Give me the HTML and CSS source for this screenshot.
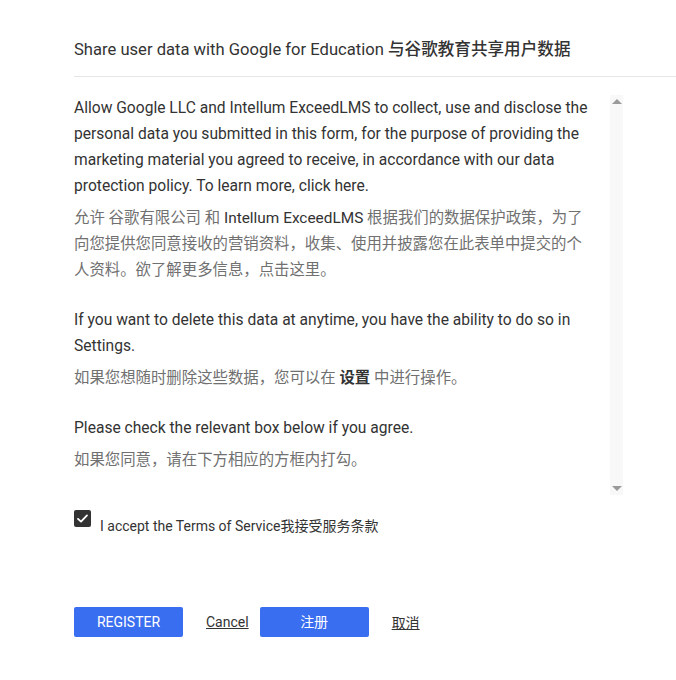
FILE: index.html
```html
<!DOCTYPE html>
<html>
    <head>
        <meta charset="utf-8">
        <title>Share user data</title>
        <link rel="stylesheet" href="styles.css">
    </head>
    <body>
        <div class="dialog">
            <h2 class="title">Share user data with Google for Education <span class="title-zh">与谷歌教育共享用户数据</span></h2>
            <hr class="divider">

            <div class="consent">
                <div class="consent-text">
                    <p class="en">Allow Google LLC and Intellum ExceedLMS to collect, use and disclose the personal data you submitted in this form, for the purpose of providing the marketing material you agreed to receive, in accordance with our data protection policy. To learn more, click here.</p>
                    <p class="zh">允许 谷歌有限公司 和 <span class="dark">Intellum ExceedLMS</span> 根据我们的数据保护政策，为了向您提供您同意接收的营销资料，收集、使用并披露您在此表单中提交的个人资料。欲了解更多信息，点击这里。</p>

                    <p class="en">If you want to delete this data at anytime, you have the ability to do so in Settings.</p>
                    <p class="zh">如果您想随时删除这些数据，您可以在 <b class="dark">设置</b> 中进行操作。</p>

                    <p class="en">Please check the relevant box below if you agree.</p>
                    <p class="zh last">如果您同意，请在下方相应的方框内打勾。</p>
                </div>
                <!-- scroll track with its two arrows -->
                <div class="track">
                    <span class="arrow up"></span>
                    <span class="arrow down"></span>
                </div>
            </div>

            <label class="agree">
                <span class="checkbox">
                    <svg width="13" height="13" viewBox="0 0 13 13"><path d="M2 6.8 L5 9.6 L11 3.4" fill="none" stroke="#fff" stroke-width="1.8" stroke-linecap="round" stroke-linejoin="round"/></svg>
                </span>
                <span class="agree-text">I accept the Terms of Service我接受服务条款</span>
            </label>

            <div class="actions">
                <div class="btn">REGISTER</div>
                <a class="link" href="#">Cancel</a>
                <div class="btn">注册</div>
                <a class="link" href="#">取消</a>
            </div>
        </div>
    </body>
</html>
```

FILE: styles.css
```css
body {
    margin: 0;
    background-color: #fff;
    font-family: Roboto, "Noto Sans CJK SC", sans-serif;
    color: #333;
}

.dialog {
    padding: 37px 0 0 74px;
}

h2.title {
    margin: 0;
    font-size: 16.6px;
    font-weight: 400;
    line-height: 26px;
    color: #333;
}

.title-zh {
    font-size: 16.6px;
    font-weight: 500;
}

hr.divider {
    margin: 13px 0 0 0;
    border: 0;
    border-top: 1px solid #e6e6e6;
}

    /*text box with fake scrollbar*/

.consent {
    display: flex;
    flex-direction: row;
    margin-top: 18px;
    height: 400px;
}

.consent-text {
    width: 522px;
    font-size: 15.4px;
    line-height: 26px;
}

.consent-text p {
    margin: 0;
}

p.en {
    color: #333;
    font-size: 15.6px;
    margin-bottom: 6px;
}

p.zh {
    color: #707070;
    margin-bottom: 24px;
}

p.zh.last {
    margin-top: 5px;
}

.dark {
    color: #333;
}

.track {
    margin-left: 14px;
    width: 13px;
    height: 400px;
    background-color: #f8f8f8;
    display: flex;
    flex-direction: column;
    justify-content: space-between;
    align-items: center;
    padding: 4px 0;
    box-sizing: border-box;
}

.arrow {
    width: 0;
    height: 0;
    border-left: 5px solid transparent;
    border-right: 5px solid transparent;
}

.arrow.up {
    border-bottom: 5px solid #9a9a9a;
}

.arrow.down {
    border-top: 5px solid #9a9a9a;
}

    /*checkbox row*/

.agree {
    display: flex;
    flex-direction: row;
    align-items: flex-start;
    margin-top: 15px;
}

.checkbox {
    width: 17px;
    height: 17px;
    border-radius: 2px;
    background-color: #333;
    display: flex;
    align-items: center;
    justify-content: center;
}

.agree-text {
    margin-left: 9px;
    margin-top: 7px;
    font-size: 14px;
    line-height: 18px;
    color: #333;
}

    /*buttons*/

.actions {
    display: flex;
    flex-direction: row;
    align-items: center;
    margin-top: 72px;
}

div.btn {
    width: 109px;
    height: 30px;
    line-height: 30px;
    text-align: center;
    background-color: #3a6ef0;
    color: #fff;
    font-size: 14px;
    font-weight: 400;
    border-radius: 2px;
    cursor: pointer;
}

a.link {
    color: #333;
    font-size: 14px;
    margin: 0 11px 0 23px;
}
```
